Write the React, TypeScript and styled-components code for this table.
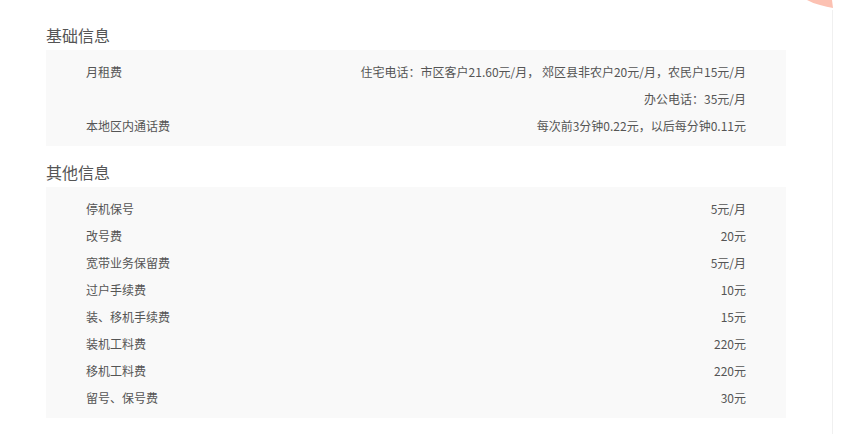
import React from "react";
import styled, { createGlobalStyle } from "styled-components";

const Global = createGlobalStyle`
  html, body { margin: 0; padding: 0; background: #fff; }
  body { font-family: "Microsoft YaHei", "Noto Sans CJK SC", "Noto Sans", sans-serif; color: #555; }
`;

const Page = styled.div`
  position: relative;
  margin-top: 10px;
  padding: 10px 46px 16px 46px;
  border-right: 1px solid #f0f0f0;
  box-sizing: content-box;
  width: 740px;
`;

const Ribbon = styled.svg`
  position: absolute;
  top: -10px;
  left: 800px;
`;

const Heading = styled.h2<{ $first?: boolean }>`
  margin: ${(p) => (p.$first ? "0" : "11px")} 0 0 0;
  font-size: 16px;
  font-weight: normal;
  line-height: 30px;
  color: #555;
`;

const Panel = styled.div`
  background: #f9f9f9;
  padding: 8px 40px 7px 40px;
`;

const Row = styled.div`
  display: flex;
  justify-content: space-between;
  align-items: flex-start;
  font-size: 12px;
  line-height: 27px;
  color: #555;
`;

const Label = styled.span``;

const Values = styled.div`
  display: flex;
  flex-direction: column;
  align-items: flex-end;
  text-align: right;
`;

type Item = { label: string; values: string[] };

const basic: Item[] = [
  {
    label: "月租费",
    values: [
      "住宅电话：市区客户21.60元/月， 郊区县非农户20元/月，农民户15元/月",
      "办公电话：35元/月",
    ],
  },
  { label: "本地区内通话费", values: ["每次前3分钟0.22元，以后每分钟0.11元"] },
];

const other: Item[] = [
  { label: "停机保号", values: ["5元/月"] },
  { label: "改号费", values: ["20元"] },
  { label: "宽带业务保留费", values: ["5元/月"] },
  { label: "过户手续费", values: ["10元"] },
  { label: "装、移机手续费", values: ["15元"] },
  { label: "装机工料费", values: ["220元"] },
  { label: "移机工料费", values: ["220元"] },
  { label: "留号、保号费", values: ["30元"] },
];

const Section = ({ title, items, first }: { title: string; items: Item[]; first?: boolean }) => (
  <>
    <Heading $first={first}>{title}</Heading>
    <Panel>
      {items.map((it) => (
        <Row key={it.label}>
          <Label>{it.label}</Label>
          <Values>
            {it.values.map((v) => (
              <span key={v}>{v}</span>
            ))}
          </Values>
        </Row>
      ))}
    </Panel>
  </>
);

export default function App() {
  return (
    <>
      <Global />
      <Page>
        <Ribbon width="40" height="12" viewBox="0 0 40 12">
          <path d="M7 0 L32 0 L33 8 Q27 7 20 5 Q12 3 7 0 Z" fill="#fcc1b2" />
        </Ribbon>
        <Section title="基础信息" items={basic} first />
        <Section title="其他信息" items={other} />
      </Page>
    </>
  );
}
